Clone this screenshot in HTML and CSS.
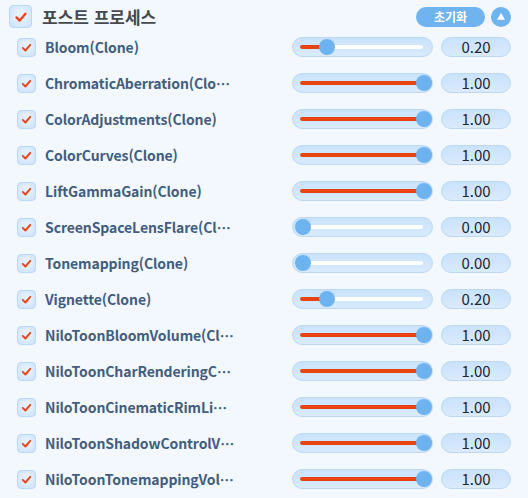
FILE: index.html
```html
<!DOCTYPE html>
<html lang="ko">
<head>
    <meta charset="UTF-8">
    <title>포스트 프로세스</title>
    <link rel="stylesheet" href="styles.css">
</head>
<body>
    <div class="panel">
        <div class="panel-header">
            <span class="check check-big">
                <svg viewBox="0 0 20 20"><path d="M5 10.5 L8.5 14 L15 6.5"/></svg>
            </span>
            <span class="title">포스트 프로세스</span>
            <button class="reset" type="button">초기화</button>
            <button class="collapse" type="button">
                <svg viewBox="0 0 20 20"><path d="M10 5.5 L14.5 13 L5.5 13 Z"/></svg>
            </button>
        </div>

        <div class="rows">
            <div class="row">
                <span class="check"><svg viewBox="0 0 20 20"><path d="M5 10.5 L8.5 14 L15 6.5"/></svg></span>
                <span class="name">Bloom(Clone)</span>
                <div class="slider" style="--v:0.2"><div class="rail"><div class="fill"></div></div><div class="thumb"></div></div>
                <div class="value">0.20</div>
            </div>
            <div class="row">
                <span class="check"><svg viewBox="0 0 20 20"><path d="M5 10.5 L8.5 14 L15 6.5"/></svg></span>
                <span class="name">ChromaticAberration(Clo⋯</span>
                <div class="slider" style="--v:1"><div class="rail"><div class="fill"></div></div><div class="thumb"></div></div>
                <div class="value">1.00</div>
            </div>
            <div class="row">
                <span class="check"><svg viewBox="0 0 20 20"><path d="M5 10.5 L8.5 14 L15 6.5"/></svg></span>
                <span class="name">ColorAdjustments(Clone)</span>
                <div class="slider" style="--v:1"><div class="rail"><div class="fill"></div></div><div class="thumb"></div></div>
                <div class="value">1.00</div>
            </div>
            <div class="row">
                <span class="check"><svg viewBox="0 0 20 20"><path d="M5 10.5 L8.5 14 L15 6.5"/></svg></span>
                <span class="name">ColorCurves(Clone)</span>
                <div class="slider" style="--v:1"><div class="rail"><div class="fill"></div></div><div class="thumb"></div></div>
                <div class="value">1.00</div>
            </div>
            <div class="row">
                <span class="check"><svg viewBox="0 0 20 20"><path d="M5 10.5 L8.5 14 L15 6.5"/></svg></span>
                <span class="name">LiftGammaGain(Clone)</span>
                <div class="slider" style="--v:1"><div class="rail"><div class="fill"></div></div><div class="thumb"></div></div>
                <div class="value">1.00</div>
            </div>
            <div class="row">
                <span class="check"><svg viewBox="0 0 20 20"><path d="M5 10.5 L8.5 14 L15 6.5"/></svg></span>
                <span class="name">ScreenSpaceLensFlare(Cl⋯</span>
                <div class="slider" style="--v:0"><div class="rail"><div class="fill"></div></div><div class="thumb"></div></div>
                <div class="value">0.00</div>
            </div>
            <div class="row">
                <span class="check"><svg viewBox="0 0 20 20"><path d="M5 10.5 L8.5 14 L15 6.5"/></svg></span>
                <span class="name">Tonemapping(Clone)</span>
                <div class="slider" style="--v:0"><div class="rail"><div class="fill"></div></div><div class="thumb"></div></div>
                <div class="value">0.00</div>
            </div>
            <div class="row">
                <span class="check"><svg viewBox="0 0 20 20"><path d="M5 10.5 L8.5 14 L15 6.5"/></svg></span>
                <span class="name">Vignette(Clone)</span>
                <div class="slider" style="--v:0.2"><div class="rail"><div class="fill"></div></div><div class="thumb"></div></div>
                <div class="value">0.20</div>
            </div>
            <div class="row">
                <span class="check"><svg viewBox="0 0 20 20"><path d="M5 10.5 L8.5 14 L15 6.5"/></svg></span>
                <span class="name">NiloToonBloomVolume(Cl⋯</span>
                <div class="slider" style="--v:1"><div class="rail"><div class="fill"></div></div><div class="thumb"></div></div>
                <div class="value">1.00</div>
            </div>
            <div class="row">
                <span class="check"><svg viewBox="0 0 20 20"><path d="M5 10.5 L8.5 14 L15 6.5"/></svg></span>
                <span class="name">NiloToonCharRenderingC⋯</span>
                <div class="slider" style="--v:1"><div class="rail"><div class="fill"></div></div><div class="thumb"></div></div>
                <div class="value">1.00</div>
            </div>
            <div class="row">
                <span class="check"><svg viewBox="0 0 20 20"><path d="M5 10.5 L8.5 14 L15 6.5"/></svg></span>
                <span class="name">NiloToonCinematicRimLi⋯</span>
                <div class="slider" style="--v:1"><div class="rail"><div class="fill"></div></div><div class="thumb"></div></div>
                <div class="value">1.00</div>
            </div>
            <div class="row">
                <span class="check"><svg viewBox="0 0 20 20"><path d="M5 10.5 L8.5 14 L15 6.5"/></svg></span>
                <span class="name">NiloToonShadowControlV⋯</span>
                <div class="slider" style="--v:1"><div class="rail"><div class="fill"></div></div><div class="thumb"></div></div>
                <div class="value">1.00</div>
            </div>
            <div class="row">
                <span class="check"><svg viewBox="0 0 20 20"><path d="M5 10.5 L8.5 14 L15 6.5"/></svg></span>
                <span class="name">NiloToonTonemappingVol⋯</span>
                <div class="slider" style="--v:1"><div class="rail"><div class="fill"></div></div><div class="thumb"></div></div>
                <div class="value">1.00</div>
            </div>
        </div>
    </div>
</body>
</html>
```

FILE: styles.css
```css
body {
    margin: 0;
    background-color: #f3f8fe;
    font-family: "Noto Sans CJK KR", "Noto Sans", sans-serif;
}
.panel {
    padding: 0 17px 0 9px;
}
.panel-header {
    display: flex;
    align-items: center;
    height: 33px;
}
.check {
    display: flex;
    align-items: center;
    justify-content: center;
    flex: none;
    width: 19px;
    height: 19px;
    box-sizing: border-box;
    border-radius: 4px;
    border: 1px solid #b9d8fa;
    background: radial-gradient(circle at 50% 45%, #e4f0ff 30%, #c9e1fd 100%);
}
.check svg {
    width: 15px;
    height: 15px;
    fill: none;
    stroke: #e8461a;
    stroke-width: 2.6;
    stroke-linecap: round;
    stroke-linejoin: round;
}
.check-big {
    width: 23px;
    height: 23px;
}
.check-big svg {
    width: 18px;
    height: 18px;
}
.title {
    margin-left: 10px;
    font-size: 17px;
    font-weight: bold;
    color: #464a4f;
}
.reset {
    margin-left: auto;
    width: 69px;
    height: 20px;
    padding: 0;
    border: none;
    border-radius: 10px;
    background-color: #6fb4ef;
    color: white;
    font-family: inherit;
    font-size: 12px;
    font-weight: bold;
}
.collapse {
    margin-left: 6px;
    width: 20px;
    height: 20px;
    padding: 0;
    border: none;
    border-radius: 50%;
    background-color: #6fb4ef;
    display: flex;
    align-items: center;
    justify-content: center;
}
.collapse svg {
    width: 18px;
    height: 18px;
    fill: white;
}
.rows {
    padding: 4px 0 0 8px;
    display: flex;
    flex-direction: column;
    gap: 16px;
}
.row {
    display: flex;
    align-items: center;
    height: 20px;
}
.name {
    margin-left: 9px;
    white-space: nowrap;
    font-size: 14px;
    font-weight: bold;
    letter-spacing: -0.1px;
    color: #425d7f;
}
.slider {
    position: relative;
    margin-left: auto;
    width: 141px;
    height: 20px;
    box-sizing: border-box;
    border-radius: 10px;
    border: 1px solid #bcd8f6;
    background: linear-gradient(#c9e2fc, #d9eafd);
}
.rail {
    position: absolute;
    left: 7px;
    right: 9px;
    top: 7px;
    height: 4px;
    border-radius: 2px;
    background-color: white;
}
.fill {
    height: 100%;
    width: calc(3px + var(--v) * 120px);
    border-radius: 2px;
    background-color: #e8440f;
}
.thumb {
    position: absolute;
    top: 1px;
    left: calc(2px + var(--v) * 121px);
    width: 16px;
    height: 16px;
    border-radius: 50%;
    background-color: #6cb3f0;
}
.value {
    margin-left: 8px;
    width: 70px;
    height: 20px;
    box-sizing: border-box;
    border-radius: 10px;
    border: 1px solid #bcd8f6;
    background: linear-gradient(#c9e2fc, #d9eafd);
    text-align: center;
    font-size: 15px;
    line-height: 18px;
    color: #23272c;
}
```
